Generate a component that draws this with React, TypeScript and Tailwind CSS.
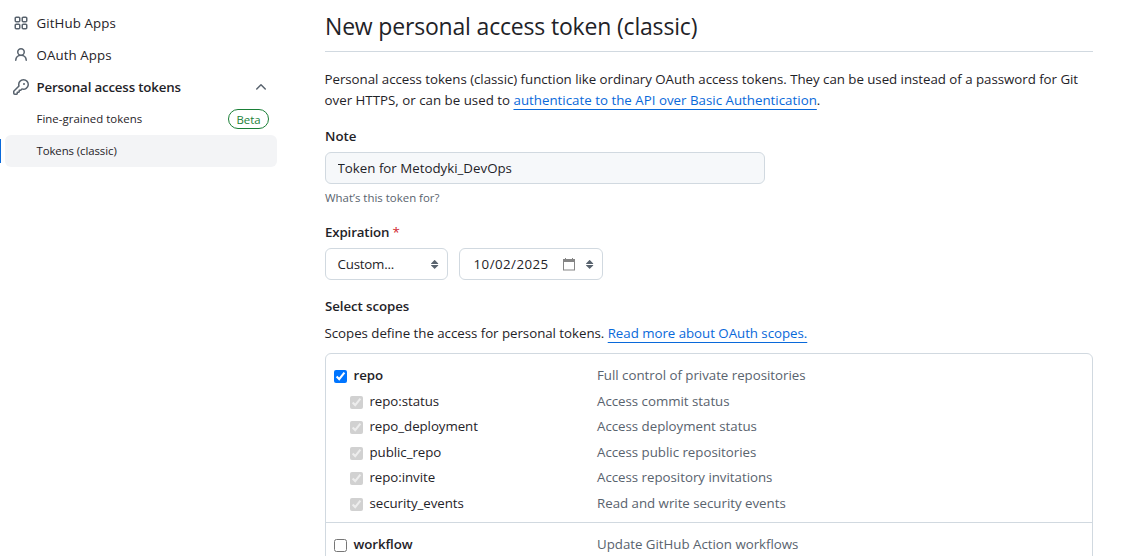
import type { ReactNode } from "react";

const PATHS = {
  apps: "M1.5 3.25c0-.966.784-1.75 1.75-1.75h2.5c.966 0 1.75.784 1.75 1.75v2.5A1.75 1.75 0 0 1 5.75 7.5h-2.5A1.75 1.75 0 0 1 1.5 5.75Zm7 0c0-.966.784-1.75 1.75-1.75h2.5c.966 0 1.75.784 1.75 1.75v2.5a1.75 1.75 0 0 1-1.75 1.75h-2.5A1.75 1.75 0 0 1 8.5 5.75Zm-7 7c0-.966.784-1.75 1.75-1.75h2.5c.966 0 1.75.784 1.75 1.75v2.5a1.75 1.75 0 0 1-1.75 1.75h-2.5a1.75 1.75 0 0 1-1.75-1.75Zm7 0c0-.966.784-1.75 1.75-1.75h2.5c.966 0 1.75.784 1.75 1.75v2.5a1.75 1.75 0 0 1-1.75 1.75h-2.5a1.75 1.75 0 0 1-1.75-1.75ZM3.25 3a.25.25 0 0 0-.25.25v2.5c0 .138.112.25.25.25h2.5A.25.25 0 0 0 6 5.75v-2.5A.25.25 0 0 0 5.75 3Zm7 0a.25.25 0 0 0-.25.25v2.5c0 .138.112.25.25.25h2.5a.25.25 0 0 0 .25-.25v-2.5a.25.25 0 0 0-.25-.25Zm-7 7a.25.25 0 0 0-.25.25v2.5c0 .138.112.25.25.25h2.5a.25.25 0 0 0 .25-.25v-2.5a.25.25 0 0 0-.25-.25Zm7 0a.25.25 0 0 0-.25.25v2.5c0 .138.112.25.25.25h2.5a.25.25 0 0 0 .25-.25v-2.5a.25.25 0 0 0-.25-.25Z",
  person: "M10.561 8.073a6.005 6.005 0 0 1 3.432 5.142.75.75 0 1 1-1.498.07 4.5 4.5 0 0 0-8.99 0 .75.75 0 0 1-1.498-.07 6.004 6.004 0 0 1 3.431-5.142 3.999 3.999 0 1 1 5.123 0ZM10.5 5a2.5 2.5 0 1 0-5 0 2.5 2.5 0 0 0 5 0Z",
  key: "M10.5 0a5.499 5.499 0 1 1-1.288 10.848l-.932.932a.749.749 0 0 1-.53.22H7v.75a.749.749 0 0 1-.22.53l-.5.5a.749.749 0 0 1-.53.22H5v.75a.749.749 0 0 1-.22.53l-.5.5a.749.749 0 0 1-.53.22h-2A1.75 1.75 0 0 1 0 14.25v-2c0-.199.079-.389.22-.53l4.932-4.932A5.5 5.5 0 0 1 10.5 0Zm-4 5.5c-.001.431.069.86.205 1.269a.75.75 0 0 1-.181.768L1.5 12.56v1.69c0 .138.112.25.25.25h1.69l.06-.06v-1.19a.75.75 0 0 1 .75-.75h1.19l.06-.06v-1.19a.75.75 0 0 1 .75-.75h1.19l1.023-1.025a.75.75 0 0 1 .768-.18A4 4 0 1 0 6.5 5.5ZM11 6a1 1 0 1 1 0-2 1 1 0 0 1 0 2Z",
  chevronUp: "M3.22 10.53a.749.749 0 0 1 0-1.06l4.25-4.25a.749.749 0 0 1 1.06 0l4.25 4.25a.749.749 0 1 1-1.06 1.06L8 6.811 4.28 10.53a.749.749 0 0 1-1.06 0Z",
  updown: "m4.074 9.427 3.396 3.396a.25.25 0 0 0 .354 0l3.396-3.396A.25.25 0 0 0 11.043 9H4.251a.25.25 0 0 0-.177.427ZM4.074 7.47 7.47 4.073a.25.25 0 0 1 .354 0L11.22 7.47a.25.25 0 0 1-.177.426H4.251a.25.25 0 0 1-.177-.426Z",
};

function Icon({ name, className = "" }: { name: keyof typeof PATHS; className?: string }) {
  return (
    <svg viewBox="0 0 16 16" fill="currentColor" className={`size-4 shrink-0 text-[#59636e] ${className}`}>
      <path d={PATHS[name]} />
    </svg>
  );
}

function CalendarIcon() {
  return (
    <svg viewBox="0 0 12 13" className="h-[13px] w-3 shrink-0">
      <path fill="#858585" d="M0 1h2V0h1v1h6V0h1v1h2v11.5H0V1ZM1 4v7.5h10V4H1Z" />
    </svg>
  );
}

function Link({ children }: { children: ReactNode }) {
  return (
    <a href="#" className="text-[#0969da] underline decoration-1 underline-offset-[4px] [text-decoration-skip-ink:none]">
      {children}
    </a>
  );
}

const NAV = [
  { icon: "apps" as const, label: "GitHub Apps" },
  { icon: "person" as const, label: "OAuth Apps" },
];

const REPO_SCOPES = [
  ["repo:status", "Access commit status"],
  ["repo_deployment", "Access deployment status"],
  ["public_repo", "Access public repositories"],
  ["repo:invite", "Access repository invitations"],
  ["security_events", "Read and write security events"],
];

function Sidebar() {
  return (
    <nav className="w-[277px] shrink-0 pt-[7px]">
      {NAV.map((item) => (
        <div key={item.label} className="flex h-8 items-center gap-[7.5px] pl-[13px]">
          <Icon name={item.icon} />
          <span className="tracking-[0.1px]">{item.label}</span>
        </div>
      ))}
      <div className="flex h-8 items-center gap-[7.5px] pr-2 pl-[13px]">
        <Icon name="key" />
        <span className="grow font-semibold tracking-[-0.17px]">Personal access tokens</span>
        <Icon name="chevronUp" />
      </div>
      <div className="flex h-8 items-center justify-between pr-2 pl-[36.5px] text-[11.4px]">
        <span className="pb-0.5 tracking-[0.04px]">Fine-grained tokens</span>
        <span className="flex h-5 w-[41px] items-center justify-center rounded-full border border-[#1a7f37] font-medium text-[#1a7f37]">
          Beta
        </span>
      </div>
      <div className="flex h-8 items-center">
        <div className="h-6 w-px bg-[#0969da]" />
        <div className="ml-1 flex h-8 grow items-center rounded-md bg-[#f3f4f6] pb-0.5 pl-[31.5px] text-[11.4px] tracking-[-0.08px]">
          Tokens (classic)
        </div>
      </div>
    </nav>
  );
}

function ScopeRow({ name, description, child = false, checked = true }: { name: string; description: string; child?: boolean; checked?: boolean }) {
  return (
    <label className={`flex h-[25.5px] items-center ${child ? "pl-6" : "pl-2"}`}>
      <input type="checkbox" defaultChecked={checked} disabled={child} className="mt-[2px] size-[13px] shrink-0" />
      <span className={child ? "ml-[6.5px] w-[227.5px] tracking-[-0.06px]" : "ml-[6.5px] w-[243.5px] font-semibold tracking-[-0.1px]"}>{name}</span>
      <span className="tracking-[-0.02px] text-[#59636e]">{description}</span>
    </label>
  );
}

export default function App() {
  return (
    <div className="flex h-[556px] overflow-hidden bg-white font-['Open_Sans',sans-serif] text-[13.3px] leading-[21px] text-[#1f2328]">
      <Sidebar />
      <main className="ml-12 w-[768px] shrink-0">
        <h1 className="h-[52px] border-b border-[#d1d9e0] pt-[8px] text-[23px] leading-9 tracking-[-0.18px]">New personal access token (classic)</h1>
        <p className="-ml-[0.5px] pt-[17px] whitespace-nowrap">
          <span className="tracking-[-0.035px]">
            Personal access tokens (classic) function like ordinary OAuth access tokens. They can be used instead of a password for Git
          </span>
          <br />
          <span className="tracking-[0.01px]">
            over HTTPS, or can be used to <Link>authenticate to the API over Basic Authentication</Link>.
          </span>
        </p>
        <div className="mt-[15px] font-semibold">Note</div>
        <input
          type="text"
          defaultValue="Token for Metodyki_DevOps"
          className="mt-[5px] block h-8 w-[440px] rounded-md border border-[#d1d9e0] bg-[#f6f8fa] px-[11.5px]"
        />
        <div className="mt-[3px] text-[11.4px] tracking-[0.02px] text-[#59636e]">What’s this token for?</div>
        <div className="mt-[14px] font-semibold tracking-[-0.15px]">
          Expiration <span className="font-normal text-[#d1242f]">*</span>
        </div>
        <div className="mt-[5px] flex gap-[11px]">
          <div className="flex h-8 w-[123px] items-center justify-between rounded-md border border-[#d1d9e0] pr-1 pl-[11.5px]">
            <span className="tracking-[-0.2px]">Custom...</span>
            <Icon name="updown" />
          </div>
          <div className="flex h-8 w-36 items-center rounded-md border border-[#d1d9e0] pr-1 pl-[13.5px]">
            <span className="grow tracking-[0.46px]">10/02/2025</span>
            <CalendarIcon />
            <Icon name="updown" className="ml-[7px]" />
          </div>
        </div>
        <div className="mt-4 font-semibold tracking-[-0.08px]">Select scopes</div>
        <p className="mt-[6px] -ml-[0.5px] tracking-[-0.035px] whitespace-nowrap">
          Scopes define the access for personal tokens. <Link>Read more about OAuth scopes.</Link>
        </p>
        <div className="mt-[9px] h-[240px] rounded-t-md border border-[#d1d9e0]">
          <div className="h-[169px] border-b border-[#d1d9e0] pt-[9px]">
            <ScopeRow name="repo" description="Full control of private repositories" />
            {REPO_SCOPES.map(([name, description]) => (
              <ScopeRow key={name} name={name} description={description} child />
            ))}
          </div>
          <div className="pt-[9px]">
            <ScopeRow name="workflow" description="Update GitHub Action workflows" checked={false} />
          </div>
        </div>
      </main>
    </div>
  );
}
